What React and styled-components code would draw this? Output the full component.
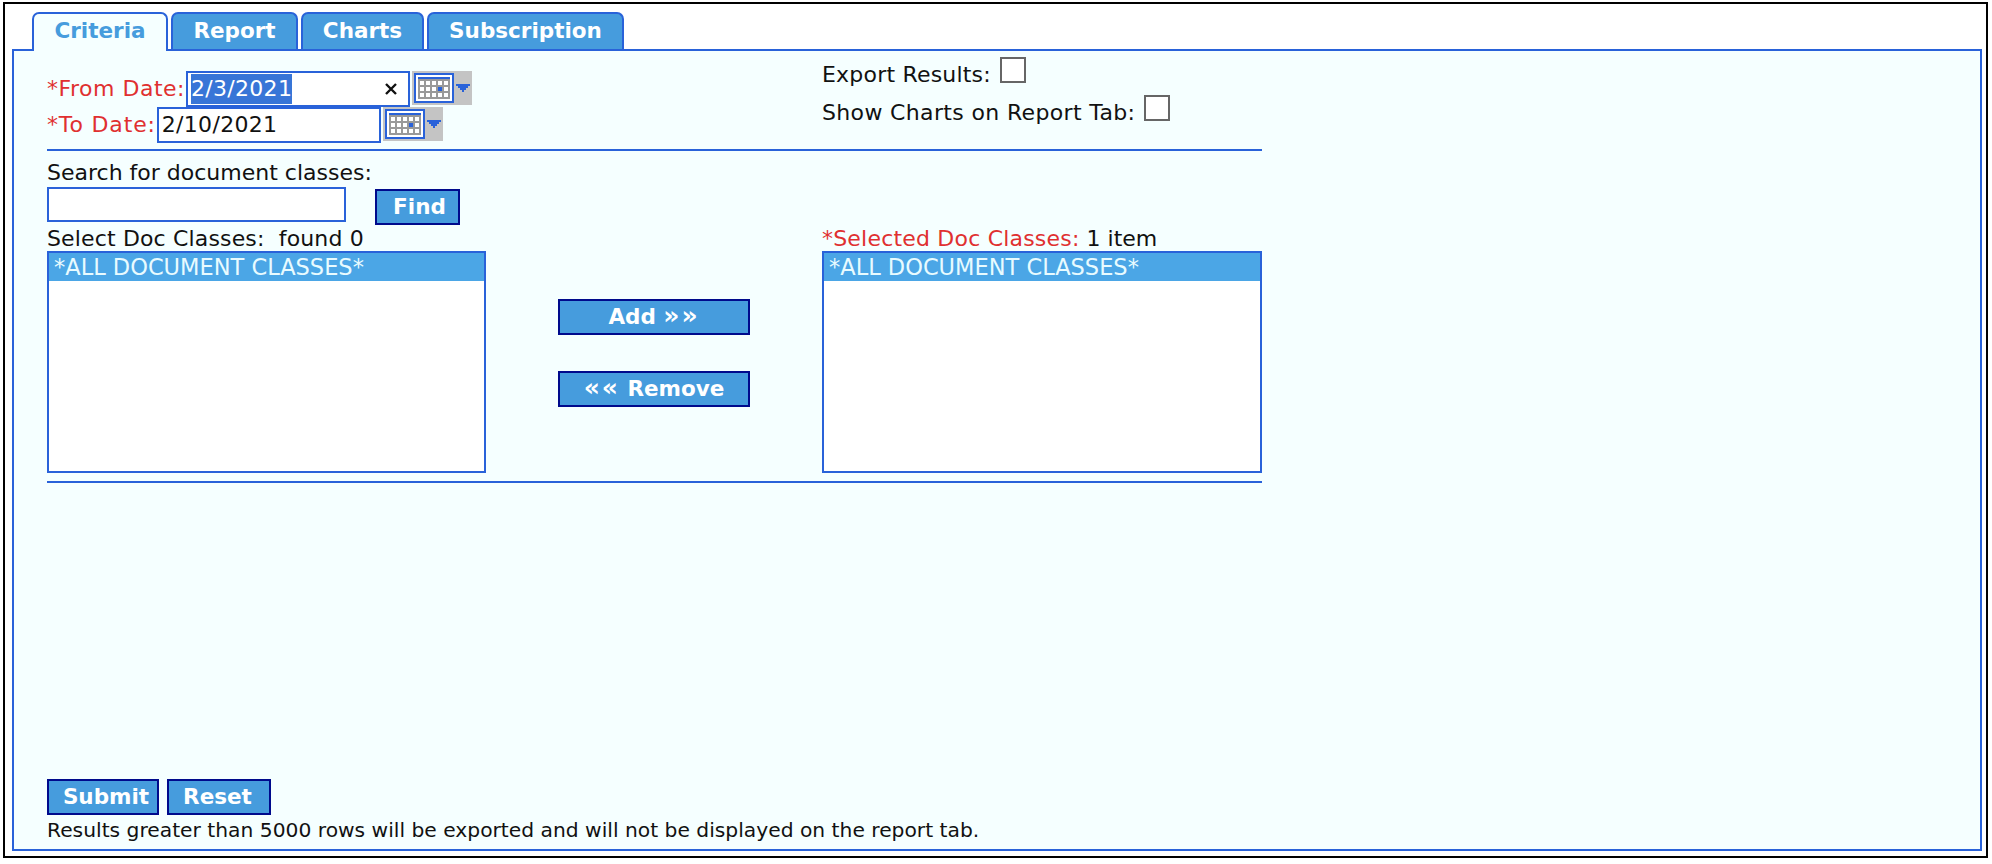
import React from 'react';
import styled, { createGlobalStyle } from 'styled-components';

const BLUE = '#2962d9';
const SKY = '#469cdd';
const NAVY = '#000a8c';
const PANEL = '#f5ffff';

const GlobalStyle = createGlobalStyle`
  html, body {
    margin: 0;
    padding: 0;
    background: #fff;
  }
  body {
    font-family: "DejaVu Sans", Verdana, sans-serif;
    font-size: 22px;
    color: #111;
  }
`;

const Frame = styled.div`
  box-sizing: border-box;
  width: 1985px;
  height: 856px;
  margin: 2px 0 0 3px;
  padding: 8px 4px 5px 7px;
  border: 2px solid #000;
  background: #fff;
  display: flex;
  flex-direction: column;
`;

const TabBar = styled.div`
  display: flex;
  gap: 3px;
  padding-left: 20px;
  height: 37px;
  position: relative;
  z-index: 1;
`;

const Tab = styled.div`
  box-sizing: border-box;
  width: ${props => props.width}px;
  height: ${props => (props.active ? 39 : 37)}px;
  border: 2px solid ${BLUE};
  border-bottom: none;
  border-radius: 7px 7px 0 0;
  background: ${props => (props.active ? PANEL : SKY)};
  color: ${props => (props.active ? SKY : '#fff')};
  font-weight: bold;
  font-size: 21.5px;
  line-height: 34px;
  text-align: center;
`;

const Panel = styled.div`
  flex: 1;
  box-sizing: border-box;
  border: 2px solid ${BLUE};
  background: ${PANEL};
  padding: 6px 0 8px 33px;
  display: flex;
  flex-direction: column;
`;

const Content = styled.div`
  width: 1215px;
`;

const TopSection = styled.div`
  display: flex;
  height: 92px;
  border-bottom: 2px solid ${BLUE};
`;

const DatesColumn = styled.div`
  width: 775px;
  padding-top: 14px;
`;

const DateRow = styled.div`
  display: flex;
  height: 36px;
`;

const Label = styled.span`
  color: ${props => (props.required ? '#e03030' : 'inherit')};
  letter-spacing: ${props => props.spacing || 0}px;
  line-height: ${props => props.lineHeight || 36}px;
  white-space: nowrap;
`;

const DateField = styled.div`
  box-sizing: border-box;
  width: 224px;
  height: 36px;
  margin-left: 1px;
  border: 2px solid ${BLUE};
  background: #fff;
  display: flex;
  align-items: center;
  justify-content: space-between;
  padding: 0 10px 0 3px;
`;

const DateText = styled.span`
  background: ${props => (props.selected ? '#3875d7' : 'transparent')};
  color: ${props => (props.selected ? '#fff' : '#111')};
  letter-spacing: 0.3px;
  line-height: 30px;
`;

const ClearIcon = styled.svg`
  width: 14px;
  height: 14px;
  display: block;
`;

const Picker = styled.div`
  box-sizing: border-box;
  width: 60px;
  height: 34px;
  margin-left: 2px;
  padding: 2px;
  background: #c4c4c4;
  display: flex;
  align-items: center;
  gap: 2px;
`;

const PickerButton = styled.div`
  box-sizing: border-box;
  width: 40px;
  height: 30px;
  border: 2px solid ${BLUE};
  background: #fff;
  display: flex;
  align-items: center;
  justify-content: center;
`;

const CalendarIcon = () => (
  <svg width="32" height="22" viewBox="0 0 32 22" shapeRendering="crispEdges">
    <rect width="32" height="2" fill="#2962d9" />
    <rect y="2" width="32" height="20" fill="#999999" />
    {[0, 1, 2].map(row =>
      [0, 1, 2, 3, 4].map(col => (
        <rect
          key={`${row}-${col}`}
          x={2 + col * 6}
          y={4 + row * 6}
          width="4"
          height="4"
          fill={row === 1 && col === 3 ? '#2962d9' : '#fff'}
        />
      ))
    )}
  </svg>
);

const ArrowIcon = () => (
  <svg width="14" height="8" viewBox="0 0 14 8" shapeRendering="crispEdges">
    <path d="M0 0h14v2h-2v2h-2v2H8v2H6V6H4V4H2V2H0z" fill="#2962d9" />
  </svg>
);

const OptionsColumn = styled.div`
  flex: 1;
  display: flex;
  flex-direction: column;
`;

const OptionRow = styled.div`
  display: flex;
  height: 38px;
`;

const CheckBox = styled.div`
  box-sizing: border-box;
  width: 26px;
  height: 26px;
  margin-left: 9px;
  border: 2px solid #666;
  background: #fff;
`;

const SearchLabel = styled.div`
  line-height: 22px;
  margin-top: 11px;
`;

const SearchRow = styled.div`
  display: flex;
  align-items: flex-start;
  gap: 29px;
  margin-top: 3px;
`;

const SearchInput = styled.input`
  box-sizing: border-box;
  width: 299px;
  height: 35px;
  border: 2px solid ${BLUE};
  background: #fff;
  outline: none;
  margin: 0;
`;

const Button = styled.button`
  box-sizing: border-box;
  width: ${props => props.width}px;
  height: 36px;
  margin: 0;
  padding: 0 ${props => props.paddingRight || 0}px 0 ${props => props.paddingLeft || 0}px;
  border: 2px solid ${NAVY};
  background: ${SKY};
  color: #fff;
  font-family: inherit;
  font-weight: bold;
  font-size: 21.5px;
  line-height: 32px;
  white-space: nowrap;
`;

const Chevrons = styled.span`
  font-size: 25px;
  line-height: 20px;
  letter-spacing: 2px;
`;

const FindButton = styled(Button)`
  margin-top: 2px;
`;

const PickerGrid = styled.div`
  display: grid;
  grid-template-columns: 439px 336px 440px;
  grid-template-rows: 23px 222px;
  margin-top: 3px;
  padding-bottom: 8px;
  border-bottom: 2px solid ${BLUE};
`;

const ListLabel = styled.div`
  line-height: 22px;
  letter-spacing: ${props => props.spacing || 0}px;
  white-space: nowrap;
`;

const ListBox = styled.div`
  box-sizing: border-box;
  border: 2px solid ${BLUE};
  background: #fff;
`;

const ListItem = styled.div`
  height: 28px;
  padding-left: 5px;
  background: #4ba6e6;
  color: #e8fbff;
  font-size: 22.5px;
  line-height: 28px;
  white-space: nowrap;
`;

const MoveButtons = styled.div`
  display: flex;
  flex-direction: column;
  align-items: center;
  gap: 36px;
  padding-top: 48px;
`;

const Footer = styled.div`
  margin-top: auto;
`;

const FooterButtons = styled.div`
  display: flex;
  gap: 8px;
  margin-bottom: 4px;
`;

const Note = styled.div`
  font-size: 20.25px;
  line-height: 22px;
  white-space: nowrap;
`;

const dateRows = [
  { label: '*From Date:', value: '2/3/2021', selected: true, spacing: 0.5 },
  { label: '*To Date:', value: '2/10/2021', selected: false, spacing: 0.85 },
];

const tabs = [
  { name: 'Criteria', width: 136, active: true },
  { name: 'Report', width: 127 },
  { name: 'Charts', width: 123 },
  { name: 'Subscription', width: 197 },
];

export default function App() {
  return (
    <>
      <GlobalStyle />
      <Frame>
        <TabBar>
          {tabs.map(tab => (
            <Tab key={tab.name} width={tab.width} active={tab.active}>
              {tab.name}
            </Tab>
          ))}
        </TabBar>
        <Panel>
          <Content>
            <TopSection>
              <DatesColumn>
                {dateRows.map(row => (
                  <DateRow key={row.label}>
                    <Label required spacing={row.spacing}>{row.label}</Label>
                    <DateField>
                      <DateText selected={row.selected}>{row.value}</DateText>
                      {row.selected && (
                        <ClearIcon viewBox="0 0 14 14">
                          <path d="M2 2l10 10M12 2L2 12" stroke="#111" strokeWidth="2.4" fill="none" />
                        </ClearIcon>
                      )}
                    </DateField>
                    <Picker>
                      <PickerButton>
                        <CalendarIcon />
                      </PickerButton>
                      <ArrowIcon />
                    </Picker>
                  </DateRow>
                ))}
              </DatesColumn>
              <OptionsColumn>
                <OptionRow>
                  <Label spacing={0.2}>Export Results:</Label>
                  <CheckBox />
                </OptionRow>
                <OptionRow>
                  <Label spacing={0.35}>Show Charts on Report Tab:</Label>
                  <CheckBox />
                </OptionRow>
              </OptionsColumn>
            </TopSection>

            <SearchLabel>Search for document classes:</SearchLabel>
            <SearchRow>
              <SearchInput type="text" />
              <FindButton width={85} paddingLeft={4}>Find</FindButton>
            </SearchRow>

            <PickerGrid>
              <ListLabel spacing={0.15}>Select Doc Classes:&nbsp; found 0</ListLabel>
              <div />
              <ListLabel>
                <Label required spacing={0.2} lineHeight={22}>*Selected Doc Classes:</Label> 1 item
              </ListLabel>
              <ListBox>
                <ListItem>*ALL DOCUMENT CLASSES*</ListItem>
              </ListBox>
              <MoveButtons>
                <Button width={192}>Add <Chevrons>»»</Chevrons></Button>
                <Button width={192}><Chevrons>««</Chevrons> Remove</Button>
              </MoveButtons>
              <ListBox>
                <ListItem>*ALL DOCUMENT CLASSES*</ListItem>
              </ListBox>
            </PickerGrid>
          </Content>
          <Footer>
            <FooterButtons>
              <Button width={112} paddingLeft={6}>Submit</Button>
              <Button width={104} paddingRight={3}>Reset</Button>
            </FooterButtons>
            <Note>Results greater than 5000 rows will be exported and will not be displayed on the report tab.</Note>
          </Footer>
        </Panel>
      </Frame>
    </>
  );
}
